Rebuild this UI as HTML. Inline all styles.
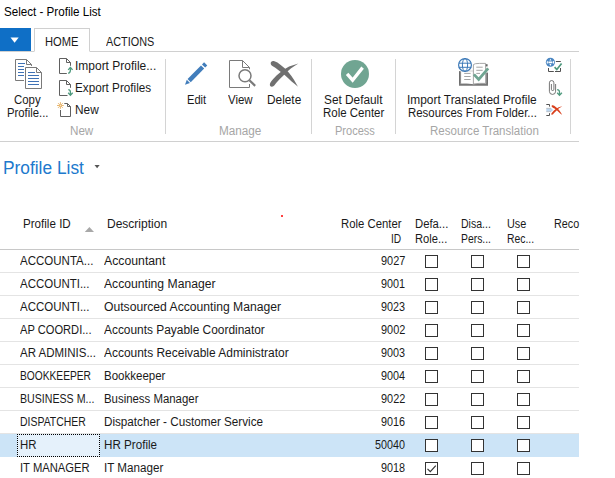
<!DOCTYPE html><html><head><meta charset="utf-8"><title>Select - Profile List</title><style>
html,body{margin:0;padding:0;background:#fff}
body{width:615px;height:478px;position:relative;overflow:hidden;font-family:"Liberation Sans",sans-serif}
.t{position:absolute;white-space:nowrap;line-height:1;transform-origin:0 0;display:block}
.abs{position:absolute}
.hl{position:absolute;left:0;width:579px;height:1px}
.sep{position:absolute;top:59px;width:1px;height:75px;background:#d4d4d4}
.cb{position:absolute;width:11px;height:11px;border:1px solid #333;background:#fff}
</style></head><body>
<div class="titlebar"><span class="t" style="left:3.82px;top:6.00px;font-size:12px;color:#000;transform:scaleX(0.9678)">Select - Profile List</span></div>
<div class="tabs">
<div class="abs" style="left:0;top:28px;width:31px;height:23px;background:#0f6fc6"></div>
<svg class="abs" style="left:0;top:28px" width="31" height="23"><path d="M10.5 9.4h8.2l-4.1 5.3z" fill="#fff"/></svg>
<div class="hl" style="top:51px;background:#d0d0d0"></div>
<div class="abs" style="left:34px;top:28px;width:54px;height:22px;border:1px solid #d0d0d0;border-bottom:1px solid #fff;background:#fff;box-sizing:content-box"></div>
<span class="t" style="left:45.17px;top:36.00px;font-size:12px;color:#1a1a1a;transform:scaleX(0.9304)">HOME</span>
<span class="t" style="left:106.30px;top:36.00px;font-size:12px;color:#1a1a1a;transform:scaleX(0.9043)">ACTIONS</span>
</div>
<div class="ribbon">
<span class="t" style="left:13.63px;top:94.00px;font-size:12px;color:#1a1a1a;transform:scaleX(0.9491)">Copy</span>
<span class="t" style="left:7.16px;top:107.00px;font-size:12px;color:#1a1a1a;transform:scaleX(0.9429)">Profile...</span>
<span class="t" style="left:75.10px;top:60.00px;font-size:12px;color:#1a1a1a;transform:scaleX(0.9981)">Import Profile...</span>
<span class="t" style="left:75.12px;top:82.00px;font-size:12px;color:#1a1a1a;transform:scaleX(0.9752)">Export Profiles</span>
<span class="t" style="left:75.11px;top:104.00px;font-size:12px;color:#1a1a1a;transform:scaleX(0.9870)">New</span>
<span class="t" style="left:70.23px;top:125.00px;font-size:12px;color:#a6a6a6;transform:scaleX(0.9696)">New</span>
<span class="t" style="left:186.87px;top:94.00px;font-size:12px;color:#1a1a1a;transform:scaleX(0.9266)">Edit</span>
<span class="t" style="left:228.10px;top:94.00px;font-size:12px;color:#1a1a1a;transform:scaleX(0.9553)">View</span>
<span class="t" style="left:267.31px;top:94.00px;font-size:12px;color:#1a1a1a;transform:scaleX(0.9865)">Delete</span>
<span class="t" style="left:218.92px;top:125.00px;font-size:12px;color:#a6a6a6;transform:scaleX(0.9772)">Manage</span>
<span class="t" style="left:323.61px;top:94.00px;font-size:12px;color:#1a1a1a;transform:scaleX(0.9855)">Set Default</span>
<span class="t" style="left:323.14px;top:107.00px;font-size:12px;color:#1a1a1a;transform:scaleX(0.9571)">Role Center</span>
<span class="t" style="left:334.78px;top:125.00px;font-size:12px;color:#a6a6a6;transform:scaleX(0.9190)">Process</span>
<span class="t" style="left:406.81px;top:94.00px;font-size:12px;color:#1a1a1a;transform:scaleX(0.9919)">Import Translated Profile</span>
<span class="t" style="left:408.25px;top:107.00px;font-size:12px;color:#1a1a1a;transform:scaleX(0.9516)">Resources From Folder...</span>
<span class="t" style="left:429.94px;top:125.00px;font-size:12px;color:#a6a6a6;transform:scaleX(0.9596)">Resource Translation</span>
<div class="sep" style="left:165px"></div>
<div class="sep" style="left:311px"></div>
<div class="sep" style="left:395px"></div>
<div class="sep" style="left:570px"></div>
<div class="hl" style="top:141px;background:#d0d0d0"></div>
<svg class="abs" style="left:0;top:52px" width="579" height="88" viewBox="0 52 579 88">
<!-- Copy Profile -->
<g fill="#fff" stroke="#7a7a7a" stroke-width="1">
<path d="M15.5 59.5H26.5L31.5 64.5V80.5H15.5z"/>
<path d="M26.5 59.5V64.5H31.5" fill="none"/>
<path d="M24 66H37L43 72V90H24z" stroke="none"/>
<path d="M25.5 67.5H36.5L41.5 72.5V88.5H25.5z"/>
<path d="M36.5 67.5V72.5H41.5" fill="none"/>
</g>
<g stroke="#3f72b5" stroke-width="1">
<path d="M18 63.5H25M18 66.5H24M18 69.5H24M18 72.5H24M18 75.5H24"/>
<path d="M28 72.5H35M28 75.5H39M28 78.5H39M28 81.5H39M28 84.5H39"/>
</g>
<!-- Import Profile -->
<g fill="none" stroke="#606060" stroke-width="1">
<path d="M66.8 73.5H59.5V58.5H66.5L70.5 62.5V65.8"/>
<path d="M66.5 58.5V62.5H70.5"/>
</g>
<g fill="none" stroke="#4f9a7e" stroke-width="1.3">
<path d="M68.2 73.3Q70.4 72.8 70.4 70.3V67.6"/>
<path d="M68.2 69.9L70.4 67.5L72.6 69.9"/>
</g>
<!-- Export Profiles -->
<g fill="none" stroke="#606060" stroke-width="1">
<path d="M67.5 95.5H59.5V80.5H66.5L70.5 84.5V87.8"/>
<path d="M66.5 80.5V84.5H70.5"/>
</g>
<g fill="none" stroke="#4f9a7e" stroke-width="1.3">
<path d="M68.3 89.6Q70.4 89.8 70.4 92V95"/>
<path d="M68.2 92.7L70.4 95.2L72.7 92.7"/>
</g>
<!-- New -->
<g fill="none" stroke="#606060" stroke-width="1">
<path d="M64.3 103.5H67.5L70.5 106.5V116.5H60.5V110"/>
<path d="M67.5 103.5V106.5H70.5"/>
</g>
<g stroke="#e6b062" stroke-width="0.9" fill="none">
<path d="M60.4 102.1V108.9M57 105.5H63.8M58 103.1L62.8 107.9M62.8 103.1L58 107.9"/>
<circle cx="60.4" cy="105.5" r="0.9" fill="#fff" stroke="#e6b062"/>
</g>
<!-- Edit pencil -->
<g transform="translate(185 84.8) rotate(-45.3)" fill="#417dbb">
<path d="M0 0L4.8 -2.25V2.25z"/>
<rect x="5.9" y="-2.25" width="19.1" height="4.5"/>
<rect x="26.4" y="-2.25" width="3" height="4.5"/>
</g>
<!-- View -->
<g fill="none" stroke="#7a7a7a" stroke-width="1">
<path d="M249.5 84V87.5H229.5V60.5H242.5L249.5 67.5V69.3"/>
<path d="M242.5 60.5V67.5H249.5"/>
</g>
<circle cx="245" cy="75.8" r="6" fill="#fff" stroke="#7a7a7a" stroke-width="1.5"/>
<path d="M249.4 80.3L255.2 85.9" stroke="#7a7a7a" stroke-width="2.2" fill="none"/>
<!-- Delete -->
<g fill="#707070">
<path d="M270.7 63.6C270.5 61.5 272.3 60.7 273.8 61.1C276.5 61.9 278.5 63.3 280.7 64.9C283.5 67 286 69.3 288.3 72C290.5 74.6 292.5 77.3 294.1 80C295.5 82.3 296.8 84.5 298 86.8C295.8 85 293.7 83.3 291.6 81.6C289.3 79.4 287.1 77.3 284.9 75.3C282.7 73.4 280.5 71.6 278.2 69.9C276.3 68.6 274.3 67.3 272.4 66.1C271.5 65.5 270.8 64.7 270.7 63.6z"/>
<path d="M298.4 63.4C295.2 64.2 292.2 65.3 289.1 66.6C286.2 68.1 283.4 69.9 280.7 72C278 74.1 275.4 76.5 273.2 79.1C271.7 80.7 270.3 82.3 269.9 84.1C269.6 85.9 270.6 86.9 272 86.8C273.9 86.3 275.3 84.3 276.6 82.5C278.7 80.1 280.9 77.9 283.2 75.8C285.6 73.2 288.1 70.8 290.8 68.6C293.2 66.7 295.7 65 298.4 63.4z"/>
</g>
<!-- Set default role center -->
<circle cx="355" cy="74" r="14" fill="#70a592"/>
<path d="M347.1 73.9L352.6 80.2L362.6 67.6" fill="none" stroke="#fff" stroke-width="3.3"/>
<!-- Import translated -->
<g>
<path d="M459 71.3H461.3V83.6H459z" fill="#8c8c8c"/>
<path d="M459 71.3H460V85H459z" fill="#6e6e6e"/>
<path d="M485.9 72.7H488V84H485.9z" fill="#8c8c8c"/>
<path d="M487 72.7H488V85H487z" fill="#6e6e6e"/>
<path d="M459 83.5Q466 83 473.5 84.3Q481 83 488 83.5V85.7H459z" fill="#777"/>
<path d="M461.3 71H473.4V83.6Q467 82.8 461.3 83.4z" fill="#fff"/>
<path d="M461.3 71H473" stroke="#c9c9c9" stroke-width="0.8" fill="none"/>
<path d="M473.4 84V64.6Q474.5 63.4 479.5 63.4H485.6V83.4Q479 83 473.4 84z" fill="#fff" stroke="#9d9d9d" stroke-width="0.9"/>
<path d="M485.8 64.2H487.6V66.4H485.8z" fill="#666"/>
<path d="M464.2 73.4H470.6M464.2 76.5H470.6M464.2 79.5H470.6M476.3 67.2H482.7M476.3 70.3H482.7M476.3 73.4H480" stroke="#a4a4a4" stroke-width="1"/>
<path d="M473.9 74.4L478.7 79.5L488.2 68.4" fill="none" stroke="#70a592" stroke-width="2.8"/>
<circle cx="465" cy="64.95" r="6.4" fill="#fff" stroke="#3c79b8" stroke-width="1.2"/>
<ellipse cx="465" cy="64.95" rx="2.6" ry="6.4" fill="none" stroke="#3c79b8" stroke-width="1"/>
<path d="M458.8 63.2H471.2M458.8 67.3H471.2" stroke="#3c79b8" stroke-width="1" fill="none"/>
</g>
<!-- small 1 -->
<g>
<path d="M548.5 68V71.5H553.8M555 71.5H560.5V68M555.8 61.5H560.8" fill="none" stroke="#505050" stroke-width="1"/>
<circle cx="550.4" cy="62.3" r="4.55" fill="#4a86c2"/>
<path d="M548.4 61.4H552.4V63.2H548.4zM549.4 60.5L550.4 58.7L551.4 60.5zM549.4 64.1L550.4 65.9L551.4 64.1z" fill="#fff"/>
<ellipse cx="547.3" cy="62.3" rx="0.55" ry="1.5" fill="#fff"/><ellipse cx="553.5" cy="62.3" rx="0.55" ry="1.5" fill="#fff"/>
<path d="M554.6 67.2L556.8 69.5L561.6 63.5" fill="none" stroke="#4f9a7e" stroke-width="1.7"/>
</g>
<!-- small 2 paperclip -->
<path d="M551.4 84V89.3a1.25 1.25 0 0 0 2.5 0V82.8a2.25 2.25 0 0 0 -4.5 0V91.3a3.1 3.1 0 0 0 6.2 0V84" fill="none" stroke="#666" stroke-width="0.9"/>
<g fill="none" stroke="#4f9a7e" stroke-width="1.3">
<path d="M557.1 89.6Q559.5 89.8 559.5 92V95"/>
<path d="M557.2 92.7L559.5 95.2L561.9 92.7"/>
</g>
<!-- small 3 -->
<g>
<path d="M546.3 104.5H549.5V106.6M546.3 115.5H549.5V113.2" fill="none" stroke="#505050" stroke-width="1"/>
<path d="M546.3 108.3H551.3L553 110L551.3 111.7H546.3z" fill="#bcd6ef"/>
<path d="M546.3 108.3H551M546.3 111.7H551" stroke="#aaa" stroke-width="0.6"/>
<g fill="#d9411e" transform="translate(551.3 105.3) scale(0.385 0.37) translate(-269.9 -61)">
<path d="M270.7 63.6C270.5 61.5 272.3 60.7 273.8 61.1C276.5 61.9 278.5 63.3 280.7 64.9C283.5 67 286 69.3 288.3 72C290.5 74.6 292.5 77.3 294.1 80C295.5 82.3 296.8 84.5 298 86.8C295.8 85 293.7 83.3 291.6 81.6C289.3 79.4 287.1 77.3 284.9 75.3C282.7 73.4 280.5 71.6 278.2 69.9C276.3 68.6 274.3 67.3 272.4 66.1C271.5 65.5 270.8 64.7 270.7 63.6z"/>
<path d="M298.4 63.4C295.2 64.2 292.2 65.3 289.1 66.6C286.2 68.1 283.4 69.9 280.7 72C278 74.1 275.4 76.5 273.2 79.1C271.7 80.7 270.3 82.3 269.9 84.1C269.6 85.9 270.6 86.9 272 86.8C273.9 86.3 275.3 84.3 276.6 82.5C278.7 80.1 280.9 77.9 283.2 75.8C285.6 73.2 288.1 70.8 290.8 68.6C293.2 66.7 295.7 65 298.4 63.4z"/>
</g>
</g>
</svg>

</div>
<div class="heading"><span class="t" style="left:2.96px;top:159.00px;font-size:18px;color:#2079cd;transform:scaleX(0.9624)">Profile List</span>
<svg class="abs" style="left:94px;top:164px" width="7" height="5"><path d="M0.5 1h5.2l-2.6 3.2z" fill="#555"/></svg></div>
<div class="table">
<div class="abs" style="left:0;top:434px;width:579px;height:23px;background:#cce4f7"></div>
<div class="abs" style="left:17px;top:434px;width:81px;height:21px;border:1px dotted #000;background:#e5f1fb"></div>
<span class="t" style="left:23.23px;top:218.00px;font-size:12px;color:#1a1a1a;transform:scaleX(0.9675)">Profile ID</span>
<span class="t" style="left:107.20px;top:218.00px;font-size:12px;color:#1a1a1a;transform:scaleX(1.0009)">Description</span>
<span class="t" style="left:340.96px;top:218.00px;font-size:12px;color:#1a1a1a;transform:scaleX(0.9444)">Role Center</span>
<span class="t" style="left:391.15px;top:233.00px;font-size:12px;color:#1a1a1a;transform:scaleX(0.8476)">ID</span>
<span class="t" style="left:415.36px;top:218.00px;font-size:12px;color:#1a1a1a;transform:scaleX(0.9414)">Defa...</span>
<span class="t" style="left:415.37px;top:233.00px;font-size:12px;color:#1a1a1a;transform:scaleX(0.9313)">Role...</span>
<span class="t" style="left:461.22px;top:218.00px;font-size:12px;color:#1a1a1a;transform:scaleX(0.8781)">Disa...</span>
<span class="t" style="left:461.24px;top:233.00px;font-size:12px;color:#1a1a1a;transform:scaleX(0.8646)">Pers...</span>
<span class="t" style="left:507.09px;top:218.00px;font-size:12px;color:#1a1a1a;transform:scaleX(0.9063)">Use</span>
<span class="t" style="left:507.14px;top:233.00px;font-size:12px;color:#1a1a1a;transform:scaleX(0.8650)">Rec...</span>
<span class="t" style="left:553.70px;top:218.00px;font-size:12px;color:#1a1a1a;transform:scaleX(0.8981)">Reco</span>
<svg class="abs" style="left:84px;top:226px" width="11" height="7"><path d="M0.8 6L5.4 1L10 6z" fill="#a8a8a8"/></svg>
<div class="abs" style="left:281px;top:215px;width:2px;height:2px;background:#f00;border-radius:1px"></div>
<div class="hl" style="top:249px;background:#c8c8c8"></div>
<div class="hl" style="top:272px;background:#e4e4e4"></div>
<div class="hl" style="top:295px;background:#e4e4e4"></div>
<div class="hl" style="top:318px;background:#e4e4e4"></div>
<div class="hl" style="top:341px;background:#e4e4e4"></div>
<div class="hl" style="top:364px;background:#e4e4e4"></div>
<div class="hl" style="top:387px;background:#e4e4e4"></div>
<div class="hl" style="top:410px;background:#e4e4e4"></div>
<div class="hl" style="top:433px;background:#e4e4e4"></div>
<div class="row"><span class="t" style="left:20.45px;top:255.00px;font-size:12px;color:#1a1a1a;transform:scaleX(0.9596)">ACCOUNTA...</span><span class="t" style="left:104.20px;top:255.00px;font-size:12px;color:#1a1a1a;transform:scaleX(1.0217)">Accountant</span><span class="t" style="left:381.05px;top:255.00px;font-size:12px;color:#1a1a1a;transform:scaleX(0.9098)">9027</span>
<div class="cb" style="left:425px;top:255px"></div>
<div class="cb" style="left:471px;top:255px"></div>
<div class="cb" style="left:517px;top:255px"></div>
</div>
<div class="row"><span class="t" style="left:20.45px;top:278.00px;font-size:12px;color:#1a1a1a;transform:scaleX(0.9559)">ACCOUNTI...</span><span class="t" style="left:104.20px;top:278.00px;font-size:12px;color:#1a1a1a;transform:scaleX(1.0127)">Accounting Manager</span><span class="t" style="left:381.05px;top:278.00px;font-size:12px;color:#1a1a1a;transform:scaleX(0.9010)">9001</span>
<div class="cb" style="left:425px;top:278px"></div>
<div class="cb" style="left:471px;top:278px"></div>
<div class="cb" style="left:517px;top:278px"></div>
</div>
<div class="row"><span class="t" style="left:20.45px;top:301.00px;font-size:12px;color:#1a1a1a;transform:scaleX(0.9559)">ACCOUNTI...</span><span class="t" style="left:104.20px;top:301.00px;font-size:12px;color:#1a1a1a;transform:scaleX(1.0132)">Outsourced Accounting Manager</span><span class="t" style="left:381.05px;top:301.00px;font-size:12px;color:#1a1a1a;transform:scaleX(0.9010)">9023</span>
<div class="cb" style="left:425px;top:301px"></div>
<div class="cb" style="left:471px;top:301px"></div>
<div class="cb" style="left:517px;top:301px"></div>
</div>
<div class="row"><span class="t" style="left:20.45px;top:324.00px;font-size:12px;color:#1a1a1a;transform:scaleX(0.9270)">AP COORDI...</span><span class="t" style="left:104.20px;top:324.00px;font-size:12px;color:#1a1a1a;transform:scaleX(0.9920)">Accounts Payable Coordinator</span><span class="t" style="left:381.05px;top:324.00px;font-size:12px;color:#1a1a1a;transform:scaleX(0.9098)">9002</span>
<div class="cb" style="left:425px;top:324px"></div>
<div class="cb" style="left:471px;top:324px"></div>
<div class="cb" style="left:517px;top:324px"></div>
</div>
<div class="row"><span class="t" style="left:20.45px;top:347.00px;font-size:12px;color:#1a1a1a;transform:scaleX(0.9578)">AR ADMINIS...</span><span class="t" style="left:104.20px;top:347.00px;font-size:12px;color:#1a1a1a;transform:scaleX(0.9960)">Accounts Receivable Administrator</span><span class="t" style="left:381.05px;top:347.00px;font-size:12px;color:#1a1a1a;transform:scaleX(0.9010)">9003</span>
<div class="cb" style="left:425px;top:347px"></div>
<div class="cb" style="left:471px;top:347px"></div>
<div class="cb" style="left:517px;top:347px"></div>
</div>
<div class="row"><span class="t" style="left:20.45px;top:370.00px;font-size:12px;color:#1a1a1a;transform:scaleX(0.8514)">BOOKKEEPER</span><span class="t" style="left:104.20px;top:370.00px;font-size:12px;color:#1a1a1a;transform:scaleX(0.9594)">Bookkeeper</span><span class="t" style="left:381.05px;top:370.00px;font-size:12px;color:#1a1a1a;transform:scaleX(0.9010)">9004</span>
<div class="cb" style="left:425px;top:370px"></div>
<div class="cb" style="left:471px;top:370px"></div>
<div class="cb" style="left:517px;top:370px"></div>
</div>
<div class="row"><span class="t" style="left:20.45px;top:393.00px;font-size:12px;color:#1a1a1a;transform:scaleX(0.8849)">BUSINESS M...</span><span class="t" style="left:104.20px;top:393.00px;font-size:12px;color:#1a1a1a;transform:scaleX(0.9501)">Business Manager</span><span class="t" style="left:381.05px;top:393.00px;font-size:12px;color:#1a1a1a;transform:scaleX(0.9098)">9022</span>
<div class="cb" style="left:425px;top:393px"></div>
<div class="cb" style="left:471px;top:393px"></div>
<div class="cb" style="left:517px;top:393px"></div>
</div>
<div class="row"><span class="t" style="left:20.45px;top:416.00px;font-size:12px;color:#1a1a1a;transform:scaleX(0.8713)">DISPATCHER</span><span class="t" style="left:104.20px;top:416.00px;font-size:12px;color:#1a1a1a;transform:scaleX(0.9733)">Dispatcher - Customer Service</span><span class="t" style="left:381.05px;top:416.00px;font-size:12px;color:#1a1a1a;transform:scaleX(0.9010)">9016</span>
<div class="cb" style="left:425px;top:416px"></div>
<div class="cb" style="left:471px;top:416px"></div>
<div class="cb" style="left:517px;top:416px"></div>
</div>
<div class="row"><span class="t" style="left:20.45px;top:439.00px;font-size:12px;color:#1a1a1a;transform:scaleX(0.9522)">HR</span><span class="t" style="left:104.20px;top:439.00px;font-size:12px;color:#1a1a1a;transform:scaleX(0.9696)">HR Profile</span><span class="t" style="left:375.05px;top:439.00px;font-size:12px;color:#1a1a1a;transform:scaleX(0.8985)">50040</span>
<div class="cb" style="left:425px;top:439px"></div>
<div class="cb" style="left:471px;top:439px"></div>
<div class="cb" style="left:517px;top:439px"></div>
</div>
<div class="row"><span class="t" style="left:20.45px;top:462.00px;font-size:12px;color:#1a1a1a;transform:scaleX(0.9358)">IT MANAGER</span><span class="t" style="left:104.20px;top:462.00px;font-size:12px;color:#1a1a1a;transform:scaleX(0.9705)">IT Manager</span><span class="t" style="left:381.05px;top:462.00px;font-size:12px;color:#1a1a1a;transform:scaleX(0.9010)">9018</span>
<div class="cb" style="left:425px;top:462px"><svg width="11" height="11" style="display:block"><path d="M1.5 5.8L4.3 8.6L9.8 2.6" fill="none" stroke="#333" stroke-width="1.2"/></svg></div>
<div class="cb" style="left:471px;top:462px"></div>
<div class="cb" style="left:517px;top:462px"></div>
</div>
</div>
</body></html>
